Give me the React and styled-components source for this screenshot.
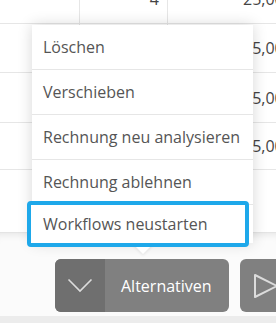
import React from "react";
import styled, { createGlobalStyle } from "styled-components";

const Global = createGlobalStyle`
  html, body {
    margin: 0;
    padding: 0;
    background: #ffffff;
    overflow: hidden;
  }
  * { box-sizing: border-box; }
`;

const Page = styled.div`
  position: relative;
  width: 276px;
  height: 323px;
  overflow: hidden;
  display: flex;
  flex-direction: column;
  font-family: "Open Sans", "Liberation Sans", sans-serif;
`;

const TableArea = styled.div`
  height: 233px;
  overflow: hidden;
  background: #ffffff;
  border-bottom: 1px solid #e4e4e4;
`;

const Table = styled.div`
  margin-top: -25px;
  width: 340px;
`;

const Row = styled.div`
  display: grid;
  grid-template-columns: 80px 88px 1fr;
  height: ${(p) => p.h || 49}px;
  border-bottom: 1px solid #e6e6e6;
`;

const Cell = styled.div`
  display: flex;
  align-items: center;
  justify-content: ${(p) => (p.right ? "flex-end" : "flex-start")};
  padding: ${(p) => (p.right ? "0 8px 0 0" : "0 0 0 75px")};
  border-right: ${(p) => (p.last ? "none" : "1px solid #e6e6e6")};
  font-size: 16px;
  color: #444;
  white-space: nowrap;
`;

const Toolbar = styled.div`
  flex: 1;
  display: flex;
  align-items: flex-start;
  gap: 11px;
  padding: 26px 0 0 55px;
  background: #fbfbfb;
  box-shadow: inset 0 8px 10px -8px rgba(0, 0, 0, 0.12);
  border-bottom: 7px solid #ececec;
`;

const SplitButton = styled.div`
  display: flex;
  width: 174px;
  height: 53px;
  border-radius: 6px;
  overflow: hidden;
  background: #808080;
  flex-shrink: 0;
`;

const ToggleHalf = styled.div`
  width: 50px;
  display: flex;
  align-items: center;
  justify-content: center;
  background: #6f6f6f;
`;

const Label = styled.div`
  display: flex;
  align-items: center;
  padding-left: 16px;
  color: #ffffff;
  font-size: 16px;
`;

const IconButton = styled.div`
  width: 60px;
  height: 53px;
  border-radius: 6px;
  background: #808080;
  flex-shrink: 0;
  display: flex;
  align-items: center;
  padding-left: 13px;
`;

const Menu = styled.div`
  position: absolute;
  left: 32px;
  top: 25px;
  width: 221px;
  background: #ffffff;
  box-shadow: 0 0 14px rgba(0, 0, 0, 0.16);
  display: flex;
  flex-direction: column;

  &::after {
    content: "";
    position: absolute;
    left: 100px;
    bottom: -11px;
    border-left: 11px solid transparent;
    border-right: 11px solid transparent;
    border-top: 11px solid #ffffff;
    filter: drop-shadow(0 2px 1px rgba(0, 0, 0, 0.06));
  }
`;

const Item = styled.div`
  height: 45px;
  display: flex;
  align-items: center;
  padding-left: 11px;
  border-bottom: 1px solid #e6e6e6;
  font-size: 16px;
  color: #555;
  white-space: nowrap;
`;

const FocusedItem = styled(Item)`
  height: 46px;
  margin: -4px 4px -4px -5px;
  padding-left: 12px;
  border: 4px solid #1ea8ea;
  border-radius: 4px;
  background: #ffffff;
  position: relative;
  z-index: 1;
`;

const rows = [
  { h: 49, qty: "4", price: "25,00 €" },
  { h: 49, qty: "", price: "25,00 €" },
  { h: 50, qty: "", price: "25,00 €" },
  { h: 47, qty: "", price: "25,00 €" },
  { h: 70, qty: "", price: "" },
];

const items = ["Löschen", "Verschieben", "Rechnung neu analysieren", "Rechnung ablehnen"];

export default function App() {
  return (
    <Page>
      <Global />
      <TableArea>
        <Table>
          {rows.map((r, i) => (
            <Row key={i} h={r.h}>
              <Cell />
              <Cell right>{r.qty}</Cell>
              <Cell last>{r.price}</Cell>
            </Row>
          ))}
        </Table>
      </TableArea>
      <Toolbar>
        <SplitButton>
          <ToggleHalf>
            <svg width="26" height="15" viewBox="0 0 26 15">
              <path d="M1.5 1.5 L13 13 L24.5 1.5" fill="none" stroke="#dcdcdc" strokeWidth="1.6" />
            </svg>
          </ToggleHalf>
          <Label>Alternativen</Label>
        </SplitButton>
        <IconButton>
          <svg width="26" height="26" viewBox="0 0 26 26">
            <path d="M2 2 L24 13 L2 24 Z" fill="none" stroke="#dcdcdc" strokeWidth="2" strokeLinejoin="round" />
          </svg>
        </IconButton>
      </Toolbar>
      <Menu>
        {items.map((t) => (
          <Item key={t}>{t}</Item>
        ))}
        <FocusedItem>Workflows neustarten</FocusedItem>
      </Menu>
    </Page>
  );
}
